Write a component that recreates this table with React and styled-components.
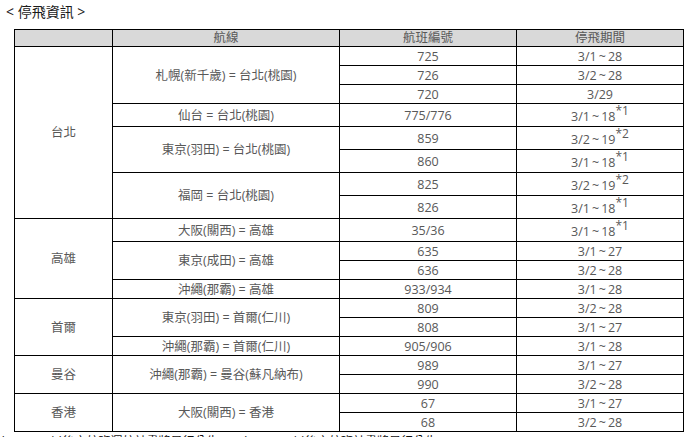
import React from "react"
import styled, { createGlobalStyle } from "styled-components"

const t = (a, b) => `${a}\u2009~\u2009${b}`

const regions = [
  {
    name: "台北",
    routes: [
      { route: "札幌(新千歲) = 台北(桃園)", flights: [["725", t("3/1", "28")], ["726", t("3/2", "28")], ["720", "3/29"]] },
      { route: "仙台 = 台北(桃園)", flights: [["775/776", t("3/1", "18"), "1"]] },
      { route: "東京(羽田) = 台北(桃園)", flights: [["859", t("3/2", "19"), "2"], ["860", t("3/1", "18"), "1"]] },
      { route: "福岡 = 台北(桃園)", flights: [["825", t("3/2", "19"), "2"], ["826", t("3/1", "18"), "1"]] },
    ],
  },
  {
    name: "高雄",
    routes: [
      { route: "大阪(關西) = 高雄", flights: [["35/36", t("3/1", "18"), "1"]] },
      { route: "東京(成田) = 高雄", flights: [["635", t("3/1", "27")], ["636", t("3/2", "28")]] },
      { route: "沖繩(那霸) = 高雄", flights: [["933/934", t("3/1", "28")]] },
    ],
  },
  {
    name: "首爾",
    routes: [
      { route: "東京(羽田) = 首爾(仁川)", flights: [["809", t("3/2", "28")], ["808", t("3/1", "27")]] },
      { route: "沖繩(那霸) = 首爾(仁川)", flights: [["905/906", t("3/1", "28")]] },
    ],
  },
  {
    name: "曼谷",
    routes: [{ route: "沖繩(那霸) = 曼谷(蘇凡納布)", flights: [["989", t("3/1", "27")], ["990", t("3/2", "28")]] }],
  },
  {
    name: "香港",
    routes: [{ route: "大阪(關西) = 香港", flights: [["67", t("3/1", "27")], ["68", t("3/2", "28")]] }],
  },
]

function App() {
  return (
    <Page>
      <GlobalStyle />
      <Title>&lt; 停飛資訊 &gt;</Title>
      <Table>
        <colgroup>
          <col style={{ width: 98 }} />
          <col style={{ width: 227 }} />
          <col style={{ width: 177 }} />
          <col style={{ width: 167 }} />
        </colgroup>
        <thead>
          <tr>
            <Head></Head>
            <Head>航線</Head>
            <Head>航班編號</Head>
            <Head>停飛期間</Head>
          </tr>
        </thead>
        <tbody>
          {regions.map((region) => {
            const total = region.routes.reduce((n, r) => n + r.flights.length, 0)
            return region.routes.map((r, ri) =>
              r.flights.map((f, fi) => (
                <Row key={region.name + r.route + f[0]} $tall={!!f[2]}>
                  {ri === 0 && fi === 0 && <Cell rowSpan={total}>{region.name}</Cell>}
                  {fi === 0 && <Cell rowSpan={r.flights.length}>{r.route}</Cell>}
                  <Cell>{f[0]}</Cell>
                  <Cell>
                    {f[1]}
                    {f[2] && <Note>*{f[2]}</Note>}
                  </Cell>
                </Row>
              ))
            )
          })}
        </tbody>
      </Table>
      <Footnote>*1：3/19以後之航班運航計畫將另行公告。　*2：3/20以後之航班計畫將另行公告。</Footnote>
    </Page>
  )
}

const GlobalStyle = createGlobalStyle`
  body {
    margin: 0;
    background: #fff;
    font-family: "Open Sans", "Noto Sans CJK TC", sans-serif;
  }
`

const Page = styled.div`
  padding: 3px 0 0 6px;
  width: 693px;
  box-sizing: border-box;
`

const Title = styled.div`
  font-size: 14px;
  line-height: 18px;
  color: #1a1a1a;
  margin-bottom: 8px;
`

const Table = styled.table`
  margin-left: 8px;
  width: 669px;
  border-collapse: collapse;
  table-layout: fixed;
  font-size: 12.5px;
  color: #585858;
`

const Head = styled.th`
  background: #d9d9d9;
  border: 1px solid #000;
  font-weight: 400;
  height: 16px;
  padding: 0;
  line-height: 16px;
  text-align: center;
`

const Row = styled.tr`
  height: ${(p) => (p.$tall ? "23px" : "19px")};
`

const Cell = styled.td`
  border: 1px solid #000;
  padding: 0;
  line-height: 17px;
  text-align: center;
  vertical-align: middle;
`

const Note = styled.sup`
  font-size: 12px;
  line-height: 1;
  vertical-align: 6px;
`

const Footnote = styled.div`
  margin-top: 2px;
  font-size: 12px;
  line-height: 16px;
  color: #111;
  white-space: nowrap;
  margin-left: -6px;
`

export default App
